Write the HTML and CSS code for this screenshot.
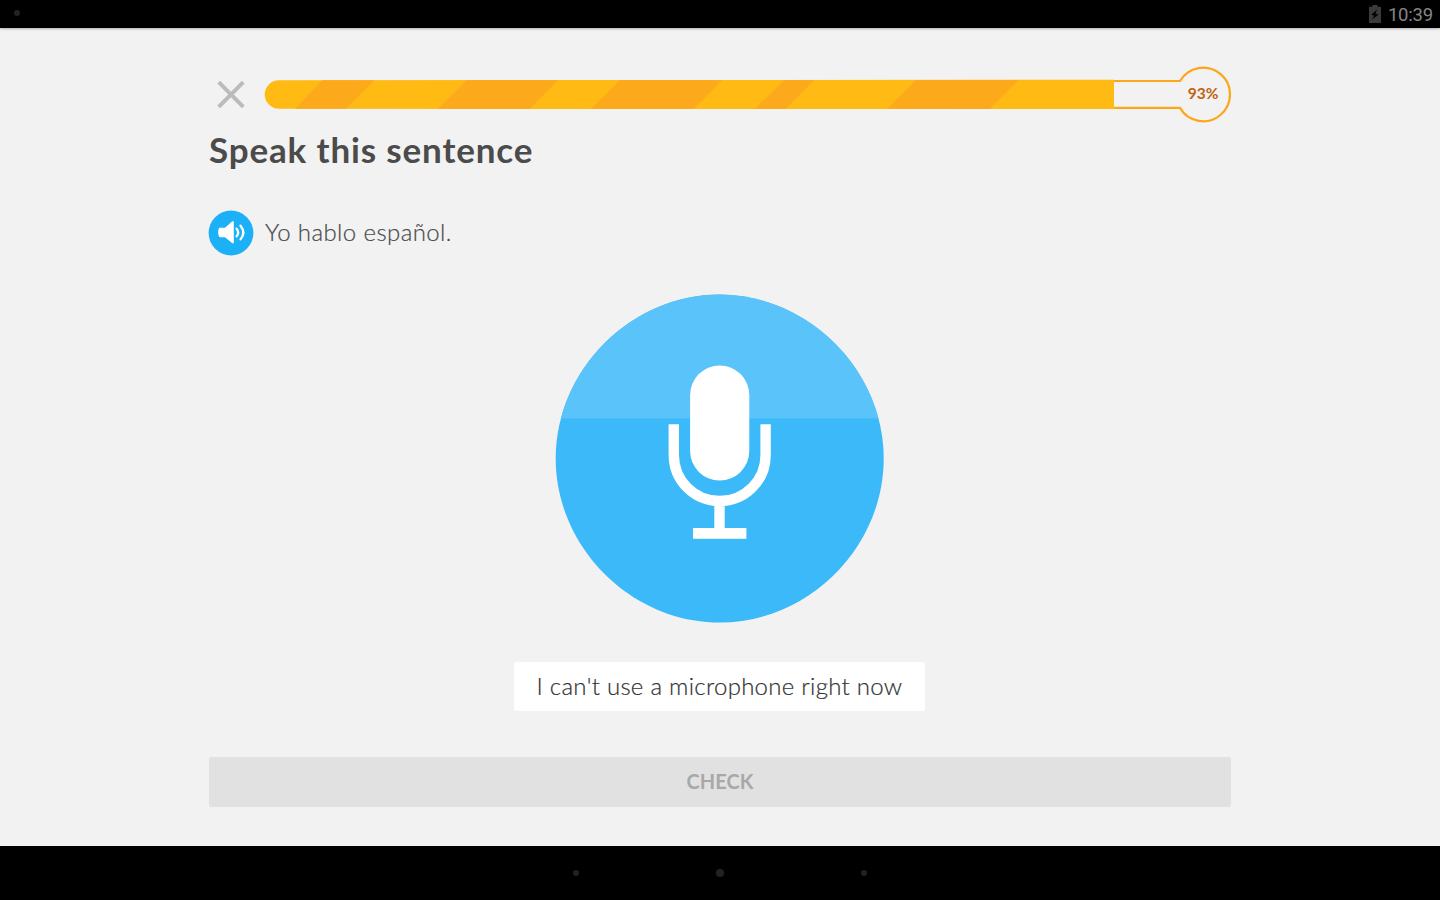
FILE: index.html
```html
<!DOCTYPE html>
<html lang="en">
<head>
<meta charset="utf-8">
<title>Speak this sentence</title>
<link rel="stylesheet" href="styles.css">
</head>
<body>
<header class="status-bar">
  <span class="status-dot"></span>
  <div class="status-right">
    <svg class="battery" width="12" height="18" viewBox="0 0 12 18"><path fill="#3b3b3b" d="M3.5 0h5v1.8H12V18H0V1.8h3.5z"/><path fill="#000" d="M8.2 4.5 2.2 9.8l3 .9-2.5 4 6.8-5.2-3.1-1z"/></svg>
    <span class="clock">10:39</span>
  </div>
</header>

<main class="lesson">
  <div class="progress-row">
    <button class="close" aria-label="Close">
      <svg width="28" height="28" viewBox="0 0 28 28"><path d="M1.700 1.200 26.300 25.800M26.300 1.200 1.700 25.800" stroke="#bbb" stroke-width="4"/></svg>
    </button>
    <div class="progress">
      <svg width="967" height="58" viewBox="264 66 967 58">
        <path d="M1114 81H1180A26.800 26.800 0 1 1 1180 107.900H1114" fill="none" stroke="#fca61b" stroke-width="2.200"/>
        <path d="M279 80.200 1114 79.800V109.100L279 108.800A14.300 14.300 0 0 1 279 80.200Z" fill="#ffba13"/>
        <g fill="#fca91b">
          <path d="M295 108.800 322.500 80.200H374.500L346 108.800Z"/>
          <path d="M438 108.800 466.500 80.200H558L530 108.800Z"/>
          <path d="M591 108.800 620 80.200H722L694 108.800Z"/>
          <path d="M755 108.800 783.500 80.200H814.500L785.500 108.800Z"/>
          <path d="M887.500 108.800 916 80H1018.500L990 109Z"/>
        </g>
      </svg>
      <span class="percent">93%</span>
    </div>
  </div>

  <h1 class="title">Speak this sentence</h1>

  <div class="prompt">
    <button class="speaker" aria-label="Play">
      <svg width="46" height="46" viewBox="-0.500 -0.500 46 46"><circle cx="22.500" cy="22.500" r="22.400" fill="#1cb0f6"/><path fill="#fff" d="M11.300 17.200H16.500L23.500 11Q25.300 9.800 25.300 12V31.400Q25.300 33.800 23.500 32.500L16.500 26.700H12Q9.700 26.700 9.700 22 9.700 17.200 11.300 17.200Z"/><path d="M28.100 18.200Q31.100 22 28.100 25.900M32 15.200Q37.600 22 32 28.900" fill="none" stroke="#fff" stroke-width="2.300" stroke-linecap="round"/></svg>
    </button>
    <span class="sentence">Yo hablo español.</span>
  </div>

  <button class="mic" aria-label="Speak">
    <svg width="330" height="330" viewBox="555 294 330 330">
      <defs>
        <clipPath id="level"><rect x="555" y="294" width="330" height="124.400"/></clipPath>
        <path id="disc" d="M719.700 294.600C808.400 294.600 883.700 369.900 883.700 458.600S808.400 622.600 719.700 622.600 555.700 547.300 555.700 458.600 631 294.600 719.700 294.600Z"/>
      </defs>
      <use href="#disc" fill="#3bb9f8"/>
      <use href="#disc" fill="#5ac4fa" clip-path="url(#level)"/>
      <rect x="690.100" y="365.400" width="59.200" height="115.200" rx="29.600" fill="#fff"/>
      <path d="M673.800 424.300V455.200A45.900 45.900 0 0 0 765.600 455.200V424.300M719.500 501V530" fill="none" stroke="#fff" stroke-width="10.400"/>
      <rect x="693" y="528" width="53.400" height="10.800" fill="#fff"/>
    </svg>
  </button>

  <button class="skip"><span class="skip-text">I can't use a microphone right now</span></button>
  <button class="check"><span class="check-text">CHECK</span></button>
</main>

<footer class="nav-bar">
  <span class="nav-dot"></span>
  <span class="nav-dot nav-dot-home"></span>
  <span class="nav-dot"></span>
</footer>
</body>
</html>
```

FILE: styles.css
```css
* { box-sizing: border-box; }
body {
  margin: 0;
  width: 1440px;
  height: 900px;
  overflow: hidden;
  display: flex;
  flex-direction: column;
  background: #f2f2f2;
  font-family: Lato, "Open Sans", sans-serif;
  color: #4b4b4b;
}
button { border: 0; padding: 0; background: none; font: inherit; color: inherit; }
svg { display: block; }
span { white-space: nowrap; }

.status-bar {
  height: 28px;
  flex: none;
  display: flex;
  justify-content: space-between;
  align-items: center;
  padding: 0 7px 0 14px;
  background: #000;
  box-shadow: 0 0 3px rgba(0, 0, 0, .5);
}
.status-dot { width: 6px; height: 6px; border-radius: 50%; background: #222; margin-bottom: 2px; }
.status-right { display: flex; align-items: center; gap: 7px; }
.clock { font: 18.500px/28px Roboto, sans-serif; color: #858585; padding-top: 1px; letter-spacing: -.2px; }

.lesson {
  width: 1023px;
  height: 818px;
  margin-left: 208px;
  padding-top: 38px;
  display: flex;
  flex-direction: column;
  align-items: flex-start;
}
.progress-row { display: flex; align-items: center; height: 58px; }
.close { width: 28px; margin: 0 19px 1px 9px; }
.progress { position: relative; }
.percent {
  position: absolute;
  right: 0;
  top: 0;
  width: 56px;
  line-height: 55px;
  text-align: center;
  font-size: 15.500px;
  font-weight: 700;
  color: #c1610f;
}
.title {
  margin: 1px 0 0 1px;
  font-size: 35px;
  line-height: 48px;
  font-weight: 700;
  letter-spacing: .85px;
  white-space: nowrap;
}
.prompt { display: flex; align-items: center; gap: 11px; margin-top: 37px; height: 46px; }
.sentence {
  font-size: 24px;
  font-weight: 300;
  line-height: 42px;
  letter-spacing: .4px;
  padding-bottom: 3px;
  -webkit-text-stroke: .2px;
}
.mic { margin: 38px 0 0 347px; height: 330px; }
.skip {
  width: 411px;
  height: 49px;
  margin: 38px 0 0 306px;
  padding-bottom: 2px;
  border-radius: 2px;
  background: #fff;
  font-size: 24px;
  font-weight: 300;
  letter-spacing: .27px;
  color: #333;
  -webkit-text-stroke: .2px;
}
.check {
  width: 1022px;
  height: 50px;
  margin: 46px 0 0 1px;
  padding-bottom: 2px;
  border-radius: 2px;
  background: #e1e1e1;
  font-size: 20px;
  font-weight: 700;
  color: #a8a8a8;
}
.nav-bar {
  height: 54px;
  flex: none;
  display: flex;
  justify-content: center;
  align-items: center;
  gap: 137px;
  background: #000;
}
.nav-dot { width: 6px; height: 6px; border-radius: 50%; background: #222; }
.nav-dot-home { width: 8px; height: 8px; }
```
